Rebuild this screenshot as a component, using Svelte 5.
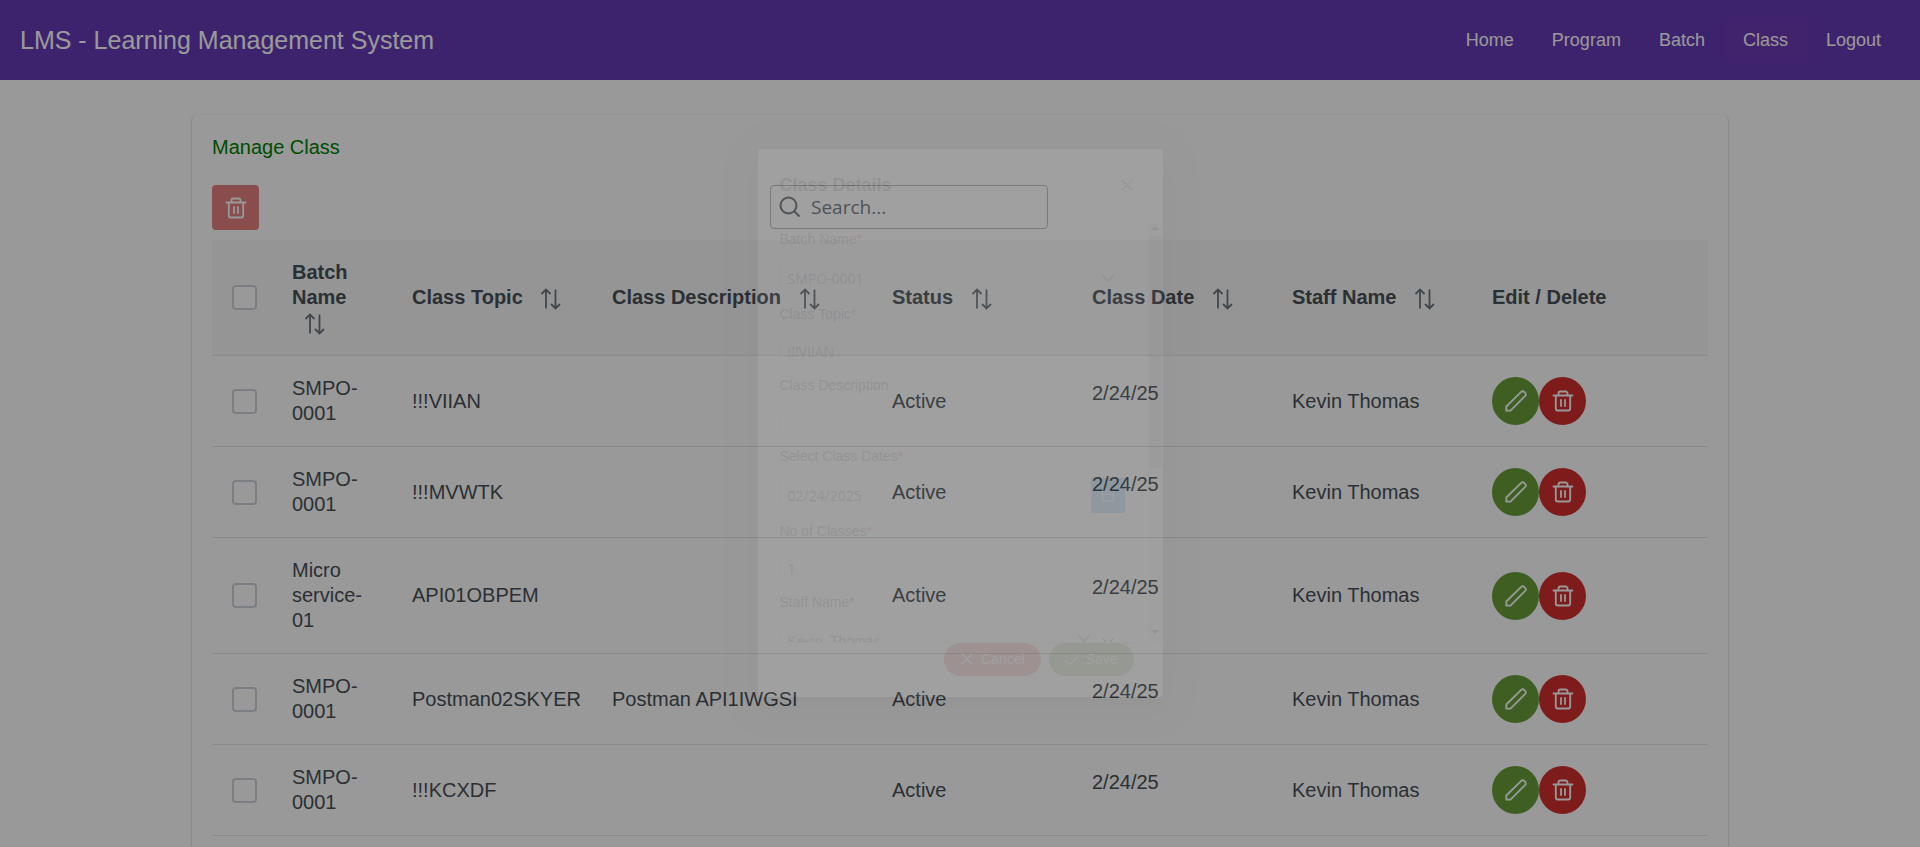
<script>
  const links = ['Home', 'Program', 'Batch', 'Class', 'Logout'];
  const columns = [
    { label: 'Batch Name', sort: true },
    { label: 'Class Topic', sort: true },
    { label: 'Class Description', sort: true },
    { label: 'Status', sort: true },
    { label: 'Class Date', sort: true },
    { label: 'Staff Name', sort: true },
    { label: 'Edit / Delete', sort: false }
  ];
  const rows = [
    { batch: 'SMPO-0001', topic: '!!!VIIAN', desc: '' },
    { batch: 'SMPO-0001', topic: '!!!MVWTK', desc: '' },
    { batch: 'Micro service-01', topic: 'API01OBPEM', desc: '' },
    { batch: 'SMPO-0001', topic: 'Postman02SKYER', desc: 'Postman API1IWGSI' },
    { batch: 'SMPO-0001', topic: '!!!KCXDF', desc: '' }
  ];
</script>

{#snippet trash()}
  <svg class="icon" viewBox="0 0 24 24" aria-hidden="true">
    <path d="M7.5 6V4.3a1.8 1.8 0 0 1 1.8-1.8h5.4a1.8 1.8 0 0 1 1.8 1.8V6M2.500 6.5h19M4.8 6.5v13a2 2 0 0 0 2 2h10.4a2 2 0 0 0 2-2v-13M10 11v6M14 11v6" />
  </svg>
{/snippet}

{#snippet chevron()}
  <svg class="mini" viewBox="0 0 14 14" aria-hidden="true"><path d="M1.5 4.5 7 10l5.500-5.500" /></svg>
{/snippet}

{#snippet cross()}
  <svg class="mini" viewBox="0 0 14 14" aria-hidden="true"><path d="M1.500 1.500l11 11M12.500 1.500l-11 11" /></svg>
{/snippet}

<div class="app">
  <header>
    <span class="brand">LMS - Learning Management System</span>
    <nav>
      {#each links as link}
        <button class:active={link === 'Class'}>{link}</button>
      {/each}
    </nav>
  </header>

  <main>
    <section class="card">
      <div class="title">Manage Class</div>
      <div class="toolbar">
        <button class="bulk" disabled aria-label="Delete selected">{@render trash()}</button>
        <label class="search">
          <svg viewBox="0 0 22 22" aria-hidden="true"><circle cx="9.500" cy="9.500" r="8" /><path d="m15.500 15.500 5 5" /></svg>
          <input type="text" placeholder="Search..." aria-label="Search" />
        </label>
      </div>

      <table>
        <colgroup>
          <col class="c-check" /><col class="c-batch" /><col class="c-mid" /><col class="c-desc" />
          <col class="c-mid" /><col class="c-mid" /><col class="c-mid" /><col />
        </colgroup>
        <thead>
          <tr>
            <th><input type="checkbox" aria-label="Select all" /></th>
            {#each columns as col}
              <th>
                {col.label}
                {#if col.sort}
                  <svg class="sort" viewBox="0 0 24 24" aria-hidden="true">
                    <path d="M8 21.500V3M3.500 7L8 2.500 12.500 7M17.500 2.500V21M13 17l4.500 4.500L22 17" />
                  </svg>
                {/if}
              </th>
            {/each}
          </tr>
        </thead>
        <tbody>
          {#each rows as row}
            <tr>
              <td><input type="checkbox" aria-label="Select {row.topic}" /></td>
              <td>{row.batch}</td>
              <td>{row.topic}</td>
              <td>{row.desc}</td>
              <td>Active</td>
              <td><div class="date">2/24/25</div></td>
              <td>Kevin Thomas</td>
              <td>
                <div class="actions">
                  <button class="edit" aria-label="Edit">
                    <svg class="icon" viewBox="0 0 24 24" aria-hidden="true">
                      <path d="M2.300 21.700v-4.200L17.200 2.900a2.100 2.100 0 0 1 3 0l1 1a2.100 2.100 0 0 1 0 3L6.500 21.700z" />
                    </svg>
                  </button>
                  <button class="delete" aria-label="Delete">{@render trash()}</button>
                </div>
              </td>
            </tr>
          {/each}
        </tbody>
      </table>
    </section>
  </main>

  <div class="mask">
    <div class="dialog" role="dialog" aria-labelledby="dialog-title">
      <div class="dialog-head">
        <span id="dialog-title">Class Details</span>
        <button class="close" aria-label="Close">{@render cross()}</button>
      </div>
      <div class="dialog-body">
        <form>
          <label for="batch">Batch Name<i>*</i></label>
          <div class="field tall"><input id="batch" value="SMPO-0001" />{@render chevron()}</div>
          <label for="topic">Class Topic<i>*</i></label>
          <div class="field"><input id="topic" value="!!!VIIAN" /></div>
          <label for="desc">Class Description</label>
          <div class="field"><input id="desc" value="" /></div>
          <label for="dates">Select Class Dates<i>*</i></label>
          <div class="field tall">
            <input id="dates" value="02/24/2025" />
            <button type="button" class="calendar" aria-label="Choose date">
              <svg viewBox="0 0 14 14" aria-hidden="true"><path d="M1.500 3h11v10h-11zM1.500 6.500h11M4.500 1v3.500M9.500 1v3.500" /></svg>
            </button>
          </div>
          <label for="count">No of Classes<i>*</i></label>
          <div class="field"><input id="count" value="1" /></div>
          <label for="staff">Staff Name<i>*</i></label>
          <div class="field tall arial"><input id="staff" value="Kevin  Thomas" />{@render cross()}{@render chevron()}</div>
        </form>
        <div class="scroll">
          <span class="arrow up"></span>
          <span class="thumb"></span>
          <span class="arrow down"></span>
        </div>
      </div>
      <div class="dialog-foot">
        <button class="cancel">{@render cross()}Cancel</button>
        <button class="save">
          <svg class="mini" viewBox="0 0 14 14" aria-hidden="true"><path d="M0 8l4.500 4.500L14 3" /></svg>Save
        </button>
      </div>
    </div>
  </div>
</div>

<style>
  :global(body) {
    margin: 0;
    overflow: hidden;
  }
  .app {
    position: relative;
    height: 100vh;
    overflow: hidden;
    background: #fff;
    font-family: 'Liberation Sans', Arial, sans-serif;
    font-size: 20px;
    line-height: 25px;
    color: #495057;
  }
  .app *,
  .app {
    box-sizing: border-box;
  }
  button {
    border: 0;
    padding: 0;
    font-family: inherit;
    display: flex;
    align-items: center;
    justify-content: center;
  }
  svg {
    fill: none;
    stroke: currentColor;
    flex: none;
  }

  header {
    height: 80px;
    padding: 0 20px;
    display: flex;
    align-items: center;
    justify-content: space-between;
    background: #673ab7;
    color: #fff;
  }
  .brand {
    font-size: 25px;
  }
  nav {
    display: flex;
  }
  nav button {
    height: 46px;
    padding: 0 19px;
    border-radius: 5px;
    background: transparent;
    color: #fff;
    font-size: 18px;
  }
  nav button.active {
    background: #6b3bb4;
  }

  main {
    padding: 35px 10%;
  }
  .card {
    padding: 20px 20px 60px;
    border-radius: 5px;
    box-shadow:
      0 2px 1px -1px rgba(0, 0, 0, 0.2),
      0 1px 1px 0 rgba(0, 0, 0, 0.14),
      0 1px 3px 0 rgba(0, 0, 0, 0.2);
  }
  .title {
    margin-bottom: 25px;
    color: #008000;
  }
  .toolbar {
    display: grid;
    grid-template-columns: 37.3% 278px;
    height: 45px;
    margin-bottom: 10px;
  }
  .bulk {
    width: 47px;
    border-radius: 4px;
    background: #d32f2f;
    color: #fff;
    opacity: 0.6;
  }
  .search {
    height: 44px;
    padding: 0 8px;
    display: flex;
    align-items: center;
    gap: 10px;
    border: 1px solid #b9bcc0;
    border-radius: 4px;
    color: #6c757d;
  }
  .search svg {
    width: 22px;
    height: 22px;
    stroke-width: 2;
  }
  .search input {
    min-width: 0;
    flex: 1;
    border: 0;
    padding: 0;
    background: transparent;
    font: 19px 'Open Sans', 'Noto Sans', sans-serif;
  }
  .search input::placeholder {
    color: #6c757d;
  }

  .icon {
    width: 24px;
    height: 24px;
    stroke-width: 1.8;
    stroke-linejoin: round;
    stroke-linecap: round;
  }
  table {
    width: 100%;
    table-layout: fixed;
    border-collapse: collapse;
  }
  .c-check {
    width: 60px;
  }
  .c-batch {
    width: 120px;
  }
  .c-mid {
    width: 200px;
  }
  .c-desc {
    width: 280px;
  }
  th,
  td {
    padding: 20px;
    border-bottom: 1px solid #e4e7ea;
    text-align: left;
    vertical-align: middle;
  }
  th {
    background: #f8f9fa;
  }
  td:last-child {
    padding: 0 20px;
  }
  th:first-child,
  td:first-child {
    padding-right: 0;
  }
  .sort {
    width: 24px;
    height: 24px;
    margin: -3px 0 -3px 10px;
    vertical-align: middle;
    color: #6c757d;
    stroke-width: 1.8;
  }
  input[type='checkbox'] {
    display: block;
    appearance: none;
    width: 25px;
    height: 25px;
    margin: 0;
    border: 2px solid #ced4da;
    border-radius: 4px;
    background: #fff;
  }
  .date {
    padding-bottom: 16px;
  }
  .actions {
    display: flex;
  }
  .actions button {
    width: 47px;
    height: 48px;
    border-radius: 50%;
    color: #fff;
  }
  .edit {
    background: #689f38;
  }
  .delete {
    background: #d32f2f;
  }

  .mask {
    position: absolute;
    inset: 0;
    padding-bottom: 2px;
    display: flex;
    align-items: center;
    justify-content: center;
    background: rgba(0, 0, 0, 0.4);
  }
  .dialog {
    width: 405px;
    display: flex;
    flex-direction: column;
    border-radius: 3px;
    background: #fff;
    opacity: 0.07;
    font-size: 14px;
    line-height: 18px;
    box-shadow:
      0 8px 11px -5px rgba(0, 0, 0, 0.2),
      0 17px 27px 2px rgba(0, 0, 0, 0.14),
      0 6px 33px 6px rgba(0, 0, 0, 0.12);
  }
  .dialog-head {
    height: 73px;
    padding: 0 20px 0 22px;
    display: flex;
    align-items: center;
    justify-content: space-between;
    font-size: 18px;
    font-weight: bold;
  }
  .close {
    width: 32px;
    height: 32px;
    border-radius: 50%;
    background: #fff;
    color: #6c757d;
    box-shadow: 0 0 0 1px #d3eafd;
  }
  .mini {
    width: 14px;
    height: 14px;
    stroke-width: 1.4;
  }
  .dialog-body {
    height: 421px;
    display: flex;
    overflow: hidden;
    border-bottom: 1px solid #dee2e6;
  }
  form {
    flex: 1;
    padding: 8px 22px 0;
  }
  form label {
    display: block;
    margin-bottom: 13px;
  }
  form label i {
    font-style: normal;
    color: #f00;
  }
  .field {
    height: 31px;
    margin-bottom: 9px;
    padding-left: 7px;
    display: flex;
    align-items: center;
    border: 1px solid #e0e3e6;
    border-radius: 3px;
  }
  .field.tall {
    height: 35px;
  }
  .field input {
    flex: 1;
    min-width: 0;
    border: 0;
    padding: 0;
    color: #495057;
    background: transparent;
    font: 14px 'Open Sans', 'Noto Sans', sans-serif;
  }
  .field.arial input {
    font-family: 'Liberation Sans', Arial, sans-serif;
    white-space: pre;
  }
  .field .mini {
    margin-right: 10px;
  }
  .calendar {
    width: 34px;
    height: 35px;
    background: #2196f3;
    color: #fff;
  }
  .calendar svg {
    width: 14px;
    height: 14px;
  }
  .scroll {
    width: 15px;
    display: flex;
    flex-direction: column;
    align-items: center;
    background: #f1f1f1;
  }
  .thumb {
    width: 13px;
    height: 232px;
    background: #c1c1c1;
  }
  .arrow {
    border: 4px solid transparent;
  }
  .up {
    margin-bottom: 6px;
    border-bottom-color: #505050;
  }
  .down {
    margin: auto 0 4px;
    border-top-color: #505050;
  }
  .dialog-foot {
    height: 54px;
    padding-right: 29px;
    display: flex;
    align-items: flex-start;
    justify-content: flex-end;
    gap: 8px;
  }
  .dialog-foot button {
    height: 33px;
    padding: 0 16px;
    gap: 7px;
    border-radius: 17px;
    color: #fff;
    font-size: 14px;
  }
  .cancel {
    background: #d32f2f;
  }
  .save {
    background: #689f38;
  }
</style>
